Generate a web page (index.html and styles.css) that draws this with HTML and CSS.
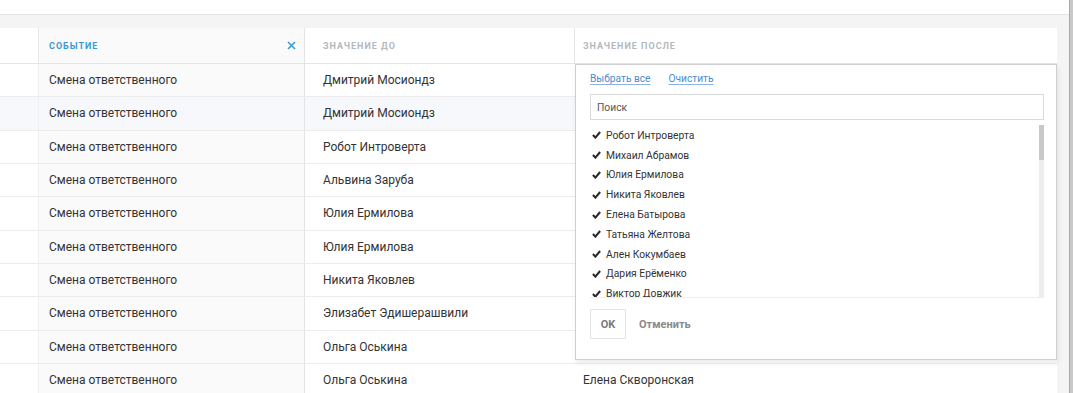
FILE: index.html
```html
<!DOCTYPE html>
<html lang="ru">
<head>
<meta charset="utf-8">
<link rel="stylesheet" href="styles.css">
</head>
<body>
<div class="app">
  <div class="main">
    <div class="topbar"></div>
    <div class="band"></div>
    <div class="content">
      <div class="table">
        <div class="row head">
          <div class="cell c0"></div>
          <div class="cell c1 active"><span class="htext">Событие</span>
            <svg class="x" width="9" height="9" viewBox="0 0 9 9"><path d="M1 1L8 8M8 1L1 8" stroke="#3a9bd4" stroke-width="1.6"/></svg>
          </div>
          <div class="cell c2"><span class="htext">Значение до</span></div>
          <div class="cell c3"><span class="htext">Значение после</span></div>
        </div>
        <div class="row"><div class="cell c0"></div><div class="cell c1">Смена ответственного</div><div class="cell c2">Дмитрий Мосиондз</div><div class="cell c3"></div></div>
        <div class="row hover"><div class="cell c0"></div><div class="cell c1">Смена ответственного</div><div class="cell c2">Дмитрий Мосиондз</div><div class="cell c3"></div></div>
        <div class="row"><div class="cell c0"></div><div class="cell c1">Смена ответственного</div><div class="cell c2">Робот Интроверта</div><div class="cell c3"></div></div>
        <div class="row"><div class="cell c0"></div><div class="cell c1">Смена ответственного</div><div class="cell c2">Альвина Заруба</div><div class="cell c3"></div></div>
        <div class="row"><div class="cell c0"></div><div class="cell c1">Смена ответственного</div><div class="cell c2">Юлия Ермилова</div><div class="cell c3"></div></div>
        <div class="row"><div class="cell c0"></div><div class="cell c1">Смена ответственного</div><div class="cell c2">Юлия Ермилова</div><div class="cell c3"></div></div>
        <div class="row"><div class="cell c0"></div><div class="cell c1">Смена ответственного</div><div class="cell c2">Никита Яковлев</div><div class="cell c3"></div></div>
        <div class="row"><div class="cell c0"></div><div class="cell c1">Смена ответственного</div><div class="cell c2">Элизабет Эдишерашвили</div><div class="cell c3"></div></div>
        <div class="row"><div class="cell c0"></div><div class="cell c1">Смена ответственного</div><div class="cell c2">Ольга Оськина</div><div class="cell c3"></div></div>
        <div class="row"><div class="cell c0"></div><div class="cell c1">Смена ответственного</div><div class="cell c2">Ольга Оськина</div><div class="cell c3">Елена Скворонская</div></div>

        <div class="dropdown">
          <div class="links"><a class="link">Выбрать все</a><a class="link">Очистить</a></div>
          <div class="search">Поиск</div>
          <div class="listwrap">
            <ul class="list">
              <li><svg class="chk" width="9" height="8" viewBox="0 0 9 8"><path d="M0.9 4.1L3.4 6.6L8.1 1" fill="none" stroke="#2b2b2b" stroke-width="2.1"/></svg>Робот Интроверта</li>
              <li><svg class="chk" width="9" height="8" viewBox="0 0 9 8"><path d="M0.9 4.1L3.4 6.6L8.1 1" fill="none" stroke="#2b2b2b" stroke-width="2.1"/></svg>Михаил Абрамов</li>
              <li><svg class="chk" width="9" height="8" viewBox="0 0 9 8"><path d="M0.9 4.1L3.4 6.6L8.1 1" fill="none" stroke="#2b2b2b" stroke-width="2.1"/></svg>Юлия Ермилова</li>
              <li><svg class="chk" width="9" height="8" viewBox="0 0 9 8"><path d="M0.9 4.1L3.4 6.6L8.1 1" fill="none" stroke="#2b2b2b" stroke-width="2.1"/></svg>Никита Яковлев</li>
              <li><svg class="chk" width="9" height="8" viewBox="0 0 9 8"><path d="M0.9 4.1L3.4 6.6L8.1 1" fill="none" stroke="#2b2b2b" stroke-width="2.1"/></svg>Елена Батырова</li>
              <li><svg class="chk" width="9" height="8" viewBox="0 0 9 8"><path d="M0.9 4.1L3.4 6.6L8.1 1" fill="none" stroke="#2b2b2b" stroke-width="2.1"/></svg>Татьяна Желтова</li>
              <li><svg class="chk" width="9" height="8" viewBox="0 0 9 8"><path d="M0.9 4.1L3.4 6.6L8.1 1" fill="none" stroke="#2b2b2b" stroke-width="2.1"/></svg>Ален Кокумбаев</li>
              <li><svg class="chk" width="9" height="8" viewBox="0 0 9 8"><path d="M0.9 4.1L3.4 6.6L8.1 1" fill="none" stroke="#2b2b2b" stroke-width="2.1"/></svg>Дария Ерёменко</li>
              <li><svg class="chk" width="9" height="8" viewBox="0 0 9 8"><path d="M0.9 4.1L3.4 6.6L8.1 1" fill="none" stroke="#2b2b2b" stroke-width="2.1"/></svg>Виктор Довжик</li>
            </ul>
            <div class="sbar"><div class="thumb"></div></div>
          </div>
          <div class="actions"><button class="ok">OK</button><button class="cancel">Отменить</button></div>
        </div>
      </div>
      <div class="gutter"></div>
    </div>
  </div>
  <div class="pagescroll"></div>
</div>
</body>
</html>
```

FILE: styles.css
```css
html, body { margin: 0; padding: 0; }
body {
  font-family: Roboto, "Noto Sans", sans-serif;
  color: #333;
  background: #fff;
  width: 1073px;
  height: 393px;
  overflow: hidden;
}
.app { display: flex; height: 393px; }
.main { flex: 1; display: flex; flex-direction: column; min-height: 0; }
.topbar { flex: none; height: 14px; background: #fff; border-bottom: 1px solid #e3e3e3; }
.band { flex: none; height: 13px; background: #f4f4f4; }
.content { flex: 1; min-height: 0; display: flex; background: #f4f4f4; }
.table { flex: none; width: 1057px; background: #fff; position: relative; }
.gutter { flex: 1; background: #f4f4f4; }
.pagescroll { flex: none; width: 3px; background: #c9c9c9; border-left: 1px solid #a9a9a9; }

.row {
  display: grid;
  grid-template-columns: 38px 267px 270px 1fr;
  height: 33.333px;
  box-sizing: border-box;
  border-bottom: 1px solid #ececec;
  font-size: 12px;
}
.row.head { height: 36px; border-bottom: 1px solid #e4e4e4; }
.row.hover { background: #f7f8fb; }
.cell { display: flex; align-items: center; padding-left: 10px; min-width: 0; white-space: nowrap; }
.c0 { padding-left: 0; }
.c1 { background: #fafafa; border-left: 1px solid #f0f0f0; border-right: 1px solid #e4e4e4; }
.row.hover .c1 { background: #f7f8fb; }
.c2 { padding-left: 18px; }
.c3 { padding-left: 8px; }
.head .c1 { border-left-color: #e6e6e6; justify-content: space-between; padding-right: 8px; }
.head .c2 { border-right: 1px solid #e4e4e4; }
.htext {
  text-transform: uppercase;
  font-size: 9px;
  font-weight: 700;
  letter-spacing: 1px;
  color: #b4b8be;
}
.active .htext { color: #3a9bd4; }
.x { display: block; }

.dropdown {
  position: absolute;
  left: 575px;
  top: 36px;
  width: 482px;
  height: 296px;
  box-sizing: border-box;
  background: #fff;
  border: 1px solid #cfcfcf;
  box-shadow: 1px 3px 5px rgba(0,0,0,0.08);
  padding: 0 12px 0 14px;
  display: flex;
  flex-direction: column;
}
.links { flex: none; display: flex; gap: 18px; padding-top: 8px; height: 21px; font-size: 10.2px; }
.link { color: #4a8cd0; text-decoration: underline; text-decoration-color: #8ab4e2; text-underline-offset: 2px; }
.search {
  flex: none;
  height: 26px;
  box-sizing: border-box;
  border: 1px solid #d9d9d9;
  font-size: 10.3px;
  color: #555;
  padding-left: 6px;
  display: flex;
  align-items: center;
  width: 454px;
}
.listwrap {
  flex: none;
  margin-top: 5px;
  width: 454px;
  height: 173px;
  box-sizing: border-box;
  border-bottom: 1px solid #eeeeee;
  display: flex;
  overflow: hidden;
}
.list { list-style: none; margin: 0; padding: 0; flex: 1; font-size: 10.3px; color: #333; }
.list li { height: 19.8px; display: flex; align-items: center; padding-left: 2px; }
.list li:first-child { margin-top: 0.5px; }
.chk { margin-right: 5px; flex: none; }
.sbar { width: 5px; background: #ededed; height: 172px; }
.thumb { height: 35px; background: #c8c8c8; }
.actions { flex: none; display: flex; align-items: center; gap: 13px; margin-top: 11px; }
button { font-family: inherit; cursor: pointer; }
.ok {
  width: 36px; height: 30px;
  border: 1px solid #e3e3e3; background: #fff; border-radius: 1px;
  font-size: 11px; font-weight: 700; color: #7a7a7a; padding: 0;
}
.cancel { border: 0; background: none; padding: 0; font-size: 11px; font-weight: 700; color: #8a8a8a; }
```
